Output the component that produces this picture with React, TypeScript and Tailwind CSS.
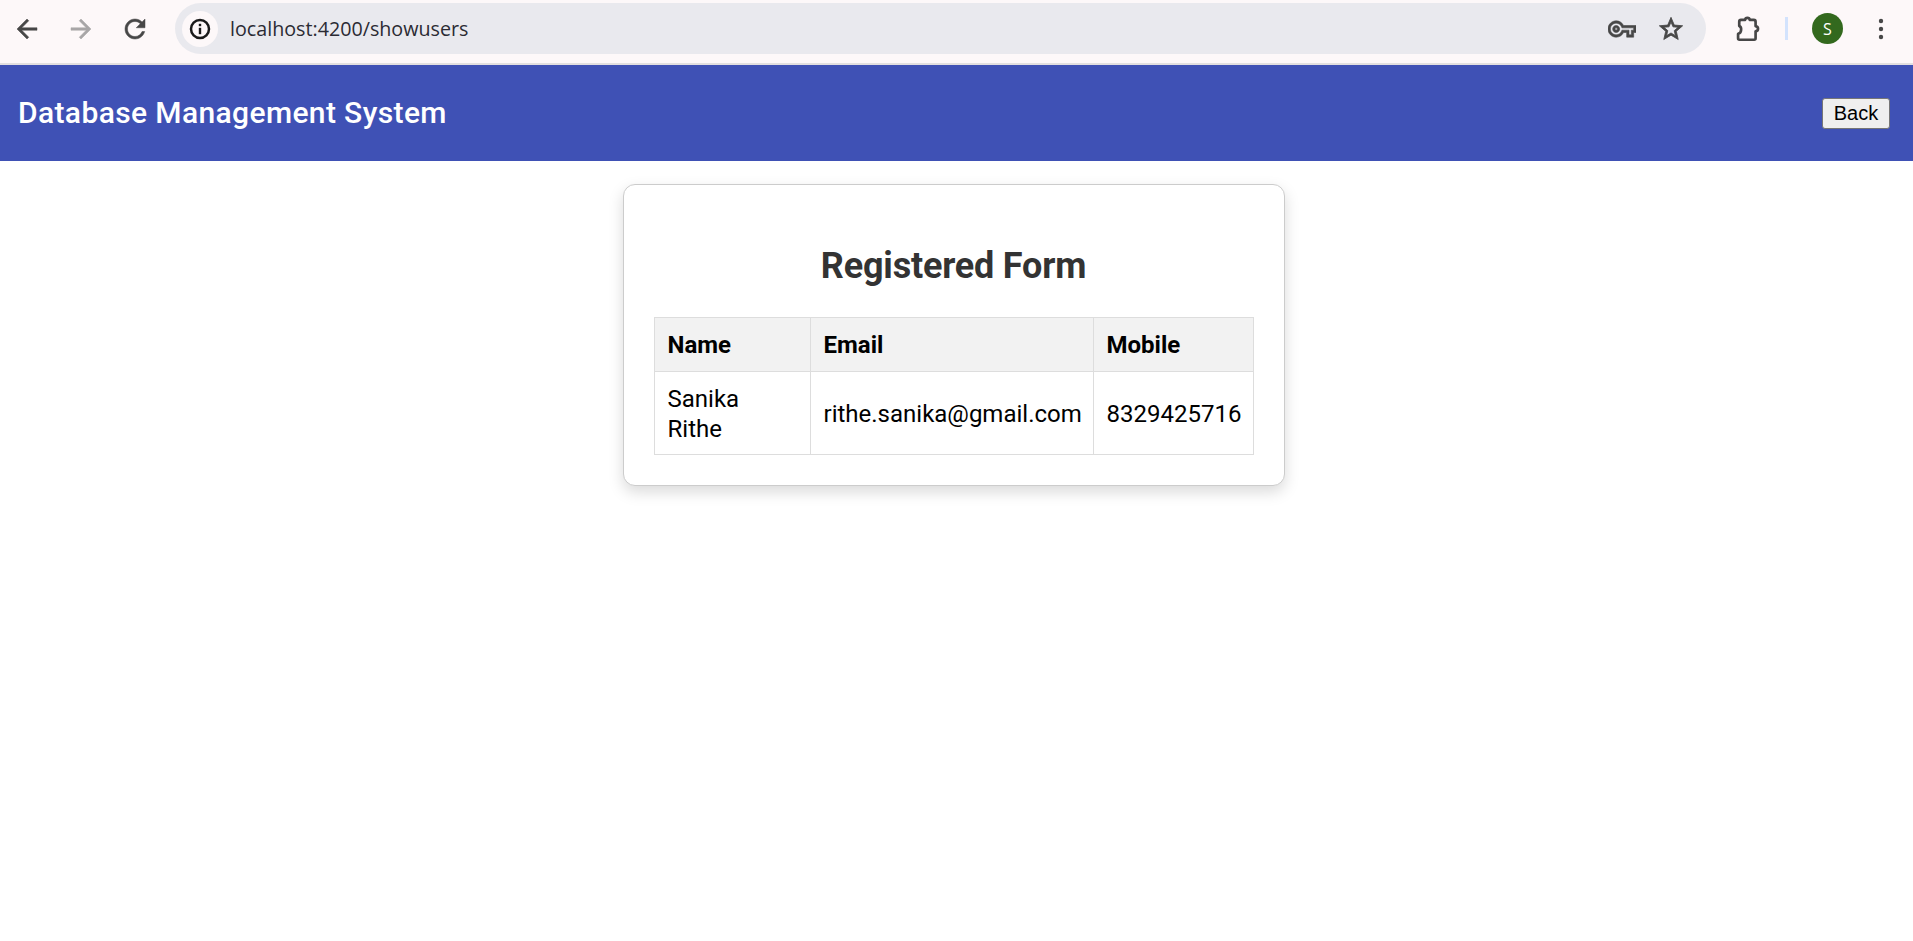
const ROBOTO = "font-['Roboto',sans-serif]"

function Icon({ d, className, bold = 0.4 }: { d: string; className: string; bold?: number }) {
  return (
    <svg viewBox="0 0 24 24" fill="currentColor" stroke="currentColor" strokeWidth={bold} className={className}>
      <path d={d} />
    </svg>
  )
}

function BrowserBar() {
  return (
    <div className="flex h-[65px] items-start border-b-2 border-[#e2dfe0] bg-[#fdf8f9] pt-[3px]">
      <div className="flex h-[51px] w-[175px] items-center pl-[12px] text-[#474747]">
        <Icon className="h-[30px] w-[30px]" d="M20 11H7.83l5.59-5.59L12 4l-8 8 8 8 1.41-1.41L7.83 13H20v-2z" />
        <Icon className="ml-[24px] h-[30px] w-[30px] text-[#a8a6a7]" d="M12 4l-1.41 1.41L16.17 11H4v2h12.17l-5.58 5.59L12 20l8-8z" />
        <Icon className="ml-[24px] h-[30px] w-[30px]" d="M17.65 6.35C16.2 4.9 14.21 4 12 4c-4.42 0-7.99 3.58-7.99 8s3.57 8 7.99 8c3.73 0 6.84-2.55 7.73-6h-2.08c-.82 2.33-3.04 4-5.65 4-3.31 0-6-2.69-6-6s2.69-6 6-6c1.66 0 3.14.69 4.22 1.78L13 11h7V4l-2.35 2.35z" />
      </div>
      <div className="flex h-[51px] w-[1531px] items-center rounded-full bg-[#e9e9ee] pl-[7px] pr-[21px]">
        <div className="flex h-[36px] w-[36px] items-center justify-center rounded-full bg-[#fdf8f9] text-[#1a1a1a]">
          <svg viewBox="0 0 24 24" className="h-[24px] w-[24px]">
            <circle cx="12" cy="12" r="9" fill="none" stroke="currentColor" strokeWidth="2.5" />
            <rect x="10.8" y="6.8" width="2.4" height="2.4" fill="currentColor" />
            <rect x="10.8" y="10.8" width="2.4" height="6.4" fill="currentColor" />
          </svg>
        </div>
        <span className="ml-[12px] font-['Open_Sans',sans-serif] text-[19.7px] text-[#2b2b33]">localhost:4200/showusers</span>
        <div className="ml-auto flex items-center gap-[21px] text-[#474747]">
          <Icon className="h-[28px] w-[28px]" bold={0.5} d="M22 19h-6v-4h-2.68c-1.14 2.42-3.6 4-6.32 4-3.86 0-7-3.14-7-7s3.14-7 7-7c2.72 0 5.17 1.58 6.32 4H24v6h-2v4zm-4-2h2v-4h2v-2H11.94l-.23-.67C11.01 8.34 9.11 7 7 7c-2.76 0-5 2.24-5 5s2.24 5 5 5c2.11 0 4.01-1.34 4.71-3.33l.23-.67H18v4zM7 15c-1.65 0-3-1.35-3-3s1.35-3 3-3 3 1.35 3 3-1.35 3-3 3zm0-4c-.55 0-1 .45-1 1s.45 1 1 1 1-.45 1-1-.45-1-1-1z" />
          <Icon className="h-[28px] w-[28px]" bold={0.7} d="M22 9.24l-7.19-.62L12 2 9.19 8.63 2 9.24l5.46 4.73L5.82 21 12 17.27 18.18 21l-1.63-7.03L22 9.24zM12 15.4l-3.76 2.27 1-4.28-3.32-2.88 4.38-.38L12 6.1l1.71 4.04 4.38.38-3.32 2.88 1 4.28L12 15.4z" />
        </div>
      </div>
      <div className="flex h-[51px] flex-1 items-center pl-[28px]">
        <svg viewBox="0 0 24 24" fill="none" stroke="#474747" strokeWidth="2.3" strokeLinejoin="round" className="h-[28px] w-[28px]">
          <path d="M6 4.2H9.5C9.8 1.8 13.2 1.8 13.5 4.2H17a1.5 1.5 0 0 1 1.5 1.5V9.5C21.3 10 21.3 13.5 18.5 14V20a1.2 1.2 0 0 1-1.2 1.2H4.7a1.2 1.2 0 0 1-1.2-1.2V16.2C6.8 15.6 6.8 10 4.5 9.5V5.7A1.5 1.5 0 0 1 6 4.2z" />
        </svg>
        <div className="ml-[23px] h-[23px] w-[3px] bg-[#d3e3fd]" />
        <div className="ml-[24px] flex h-[31px] w-[31px] items-center justify-center rounded-full bg-[#33691e] font-['Open_Sans',sans-serif] text-[16px] text-white">S</div>
        <svg viewBox="0 0 6 24" fill="#474747" className="ml-[35px] h-[24px] w-[6px]">
          <circle cx="3" cy="4" r="2.2" />
          <circle cx="3" cy="12" r="2.2" />
          <circle cx="3" cy="20" r="2.2" />
        </svg>
      </div>
    </div>
  )
}

export default function App() {
  return (
    <div className={`min-h-[941px] bg-white ${ROBOTO}`}>
      <BrowserBar />
      <header className="flex h-[96px] items-center justify-between bg-[#3f51b5] pl-[18px] pr-[23px]">
        <h1 className="text-[30px] font-medium leading-[36px] tracking-[0.375px] text-white">Database Management System</h1>
        <button className="h-[31px] w-[68px] rounded-[3px] border border-[#767676] bg-[#efefef] font-['Liberation_Sans',sans-serif] text-[20px] leading-none text-black">Back</button>
      </header>
      <main className="flex justify-center pr-[6px] pt-[23px]">
        <div className="w-[662px] rounded-[12px] border border-[#ccc] bg-white p-[30px] shadow-[0_6px_15px_rgba(0,0,0,0.15)]">
          <h2 className="my-[30px] text-center text-[36px] font-bold leading-[42px] tracking-[-0.2px] text-[#333]">Registered Form</h2>
          <table className="w-[600px] table-fixed border-collapse text-[24px] text-black">
            <thead>
              <tr className="h-[54px] bg-[#f2f2f2] text-left">
                <th className="w-[156px] border border-[#ddd] pl-[13px] pr-[11px] font-bold">Name</th>
                <th className="w-[283px] border border-[#ddd] pl-[13px] pr-[11px] font-bold">Email</th>
                <th className="border border-[#ddd] pl-[13px] pr-[11px] font-bold">Mobile</th>
              </tr>
            </thead>
            <tbody>
              <tr className="h-[83px]">
                <td className="border border-[#ddd] pl-[13px] pr-[11px] pt-[2px] leading-[30px]">Sanika<br />Rithe</td>
                <td className="border border-[#ddd] pl-[13px] pr-[11px] pt-[2px]">rithe.sanika@gmail.com</td>
                <td className="border border-[#ddd] pl-[13px] pr-[11px] pt-[2px]">8329425716</td>
              </tr>
            </tbody>
          </table>
        </div>
      </main>
    </div>
  )
}
